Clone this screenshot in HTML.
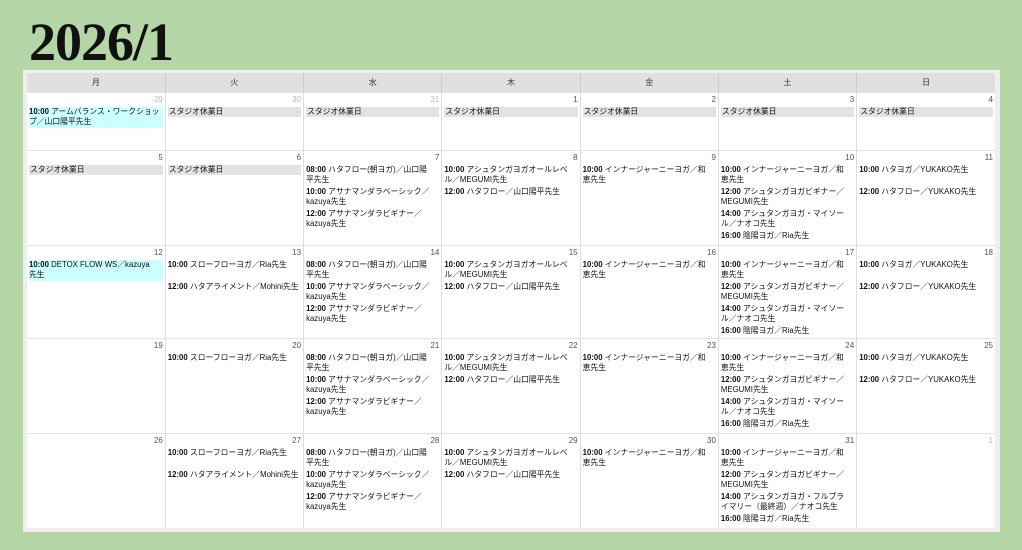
<!DOCTYPE html><html><head><meta charset="utf-8"><style>
*{margin:0;padding:0;box-sizing:border-box}
body{width:1022px;height:550px;background:#b5d7a8;position:relative;overflow:hidden;font-family:"Liberation Sans","Noto Sans CJK JP",sans-serif;color:#111}
h1{position:absolute;left:29px;top:11px;font-family:"Liberation Serif","Noto Serif CJK SC",serif;font-weight:bold;font-size:54px;letter-spacing:-1px;color:#111}
.panel{position:absolute;left:23px;top:70px;width:977px;height:462px;background:#efefef}
table{position:absolute;left:4px;top:3px;width:968px;border-collapse:collapse;table-layout:fixed;background:#fff}
th{height:19px;background:#e0e0e0;font-size:8px;font-weight:normal;color:#333;border-left:1px solid #ccc}
td{vertical-align:top;border-left:1px solid #ddd;border-top:1px solid #e4e4e4;padding:2px 2px 0 2px;font-size:7.8px;line-height:10.5px;overflow:hidden}
th:first-child,td:first-child{border-left:none}
.n{text-align:right;color:#555;height:12px;font-size:8px;line-height:10px}
.n.o{color:#bbb}
.e{min-height:21px;margin-bottom:1px;white-space:nowrap}
.e b{font-weight:bold}
.last{min-height:0}
.c{background:#e3e3e3;height:10px;line-height:10px;padding-left:1px}
.cy{background:#ccffff}
</style></head><body>
<h1>2026/1</h1>
<div class="panel"><table>
<tr><th>月</th><th>火</th><th>水</th><th>木</th><th>金</th><th>土</th><th>日</th></tr>
<tr style="height:58px">
<td><div class="n o">29</div><div class="e cy"><b>10:00</b> アームバランス・ワークショッ<br>プ／山口陽平先生</div></td>
<td><div class="n o">30</div><div class="c">スタジオ休業日</div></td>
<td><div class="n o">31</div><div class="c">スタジオ休業日</div></td>
<td><div class="n">1</div><div class="c">スタジオ休業日</div></td>
<td><div class="n">2</div><div class="c">スタジオ休業日</div></td>
<td><div class="n">3</div><div class="c">スタジオ休業日</div></td>
<td><div class="n">4</div><div class="c">スタジオ休業日</div></td></tr>
<tr style="height:95px">
<td><div class="n">5</div><div class="c">スタジオ休業日</div></td>
<td><div class="n">6</div><div class="c">スタジオ休業日</div></td>
<td><div class="n">7</div><div class="e"><b>08:00</b> ハタフロー(朝ヨガ)／山口陽<br>平先生</div><div class="e"><b>10:00</b> アサナマンダラベーシック／<br>kazuya先生</div><div class="e"><b>12:00</b> アサナマンダラビギナー／<br>kazuya先生</div></td>
<td><div class="n">8</div><div class="e"><b>10:00</b> アシュタンガヨガオールレベ<br>ル／MEGUMI先生</div><div class="e"><b>12:00</b> ハタフロー／山口陽平先生</div></td>
<td><div class="n">9</div><div class="e"><b>10:00</b> インナージャーニーヨガ／和<br>恵先生</div></td>
<td><div class="n">10</div><div class="e"><b>10:00</b> インナージャーニーヨガ／和<br>恵先生</div><div class="e"><b>12:00</b> アシュタンガヨガビギナー／<br>MEGUMI先生</div><div class="e"><b>14:00</b> アシュタンガヨガ・マイソー<br>ル／ナオコ先生</div><div class="e last"><b>16:00</b> 陰陽ヨガ／Ria先生</div></td>
<td><div class="n">11</div><div class="e"><b>10:00</b> ハタヨガ／YUKAKO先生</div><div class="e"><b>12:00</b> ハタフロー／YUKAKO先生</div></td></tr>
<tr style="height:93px">
<td><div class="n">12</div><div class="e cy"><b>10:00</b> DETOX FLOW WS／kazuya<br>先生</div></td>
<td><div class="n">13</div><div class="e"><b>10:00</b> スローフローヨガ／Ria先生</div><div class="e"><b>12:00</b> ハタアライメント／Mohini先生</div></td>
<td><div class="n">14</div><div class="e"><b>08:00</b> ハタフロー(朝ヨガ)／山口陽<br>平先生</div><div class="e"><b>10:00</b> アサナマンダラベーシック／<br>kazuya先生</div><div class="e"><b>12:00</b> アサナマンダラビギナー／<br>kazuya先生</div></td>
<td><div class="n">15</div><div class="e"><b>10:00</b> アシュタンガヨガオールレベ<br>ル／MEGUMI先生</div><div class="e"><b>12:00</b> ハタフロー／山口陽平先生</div></td>
<td><div class="n">16</div><div class="e"><b>10:00</b> インナージャーニーヨガ／和<br>恵先生</div></td>
<td><div class="n">17</div><div class="e"><b>10:00</b> インナージャーニーヨガ／和<br>恵先生</div><div class="e"><b>12:00</b> アシュタンガヨガビギナー／<br>MEGUMI先生</div><div class="e"><b>14:00</b> アシュタンガヨガ・マイソー<br>ル／ナオコ先生</div><div class="e last"><b>16:00</b> 陰陽ヨガ／Ria先生</div></td>
<td><div class="n">18</div><div class="e"><b>10:00</b> ハタヨガ／YUKAKO先生</div><div class="e"><b>12:00</b> ハタフロー／YUKAKO先生</div></td></tr>
<tr style="height:95px">
<td><div class="n">19</div></td>
<td><div class="n">20</div><div class="e"><b>10:00</b> スローフローヨガ／Ria先生</div></td>
<td><div class="n">21</div><div class="e"><b>08:00</b> ハタフロー(朝ヨガ)／山口陽<br>平先生</div><div class="e"><b>10:00</b> アサナマンダラベーシック／<br>kazuya先生</div><div class="e"><b>12:00</b> アサナマンダラビギナー／<br>kazuya先生</div></td>
<td><div class="n">22</div><div class="e"><b>10:00</b> アシュタンガヨガオールレベ<br>ル／MEGUMI先生</div><div class="e"><b>12:00</b> ハタフロー／山口陽平先生</div></td>
<td><div class="n">23</div><div class="e"><b>10:00</b> インナージャーニーヨガ／和<br>恵先生</div></td>
<td><div class="n">24</div><div class="e"><b>10:00</b> インナージャーニーヨガ／和<br>恵先生</div><div class="e"><b>12:00</b> アシュタンガヨガビギナー／<br>MEGUMI先生</div><div class="e"><b>14:00</b> アシュタンガヨガ・マイソー<br>ル／ナオコ先生</div><div class="e last"><b>16:00</b> 陰陽ヨガ／Ria先生</div></td>
<td><div class="n">25</div><div class="e"><b>10:00</b> ハタヨガ／YUKAKO先生</div><div class="e"><b>12:00</b> ハタフロー／YUKAKO先生</div></td></tr>
<tr style="height:95px">
<td><div class="n">26</div></td>
<td><div class="n">27</div><div class="e"><b>10:00</b> スローフローヨガ／Ria先生</div><div class="e"><b>12:00</b> ハタアライメント／Mohini先生</div></td>
<td><div class="n">28</div><div class="e"><b>08:00</b> ハタフロー(朝ヨガ)／山口陽<br>平先生</div><div class="e"><b>10:00</b> アサナマンダラベーシック／<br>kazuya先生</div><div class="e"><b>12:00</b> アサナマンダラビギナー／<br>kazuya先生</div></td>
<td><div class="n">29</div><div class="e"><b>10:00</b> アシュタンガヨガオールレベ<br>ル／MEGUMI先生</div><div class="e"><b>12:00</b> ハタフロー／山口陽平先生</div></td>
<td><div class="n">30</div><div class="e"><b>10:00</b> インナージャーニーヨガ／和<br>恵先生</div></td>
<td><div class="n">31</div><div class="e"><b>10:00</b> インナージャーニーヨガ／和<br>恵先生</div><div class="e"><b>12:00</b> アシュタンガヨガビギナー／<br>MEGUMI先生</div><div class="e"><b>14:00</b> アシュタンガヨガ・フルプラ<br>イマリー（最終週）／ナオコ先生</div><div class="e last"><b>16:00</b> 陰陽ヨガ／Ria先生</div></td>
<td><div class="n o">1</div></td></tr>
</table></div>
</body></html>
